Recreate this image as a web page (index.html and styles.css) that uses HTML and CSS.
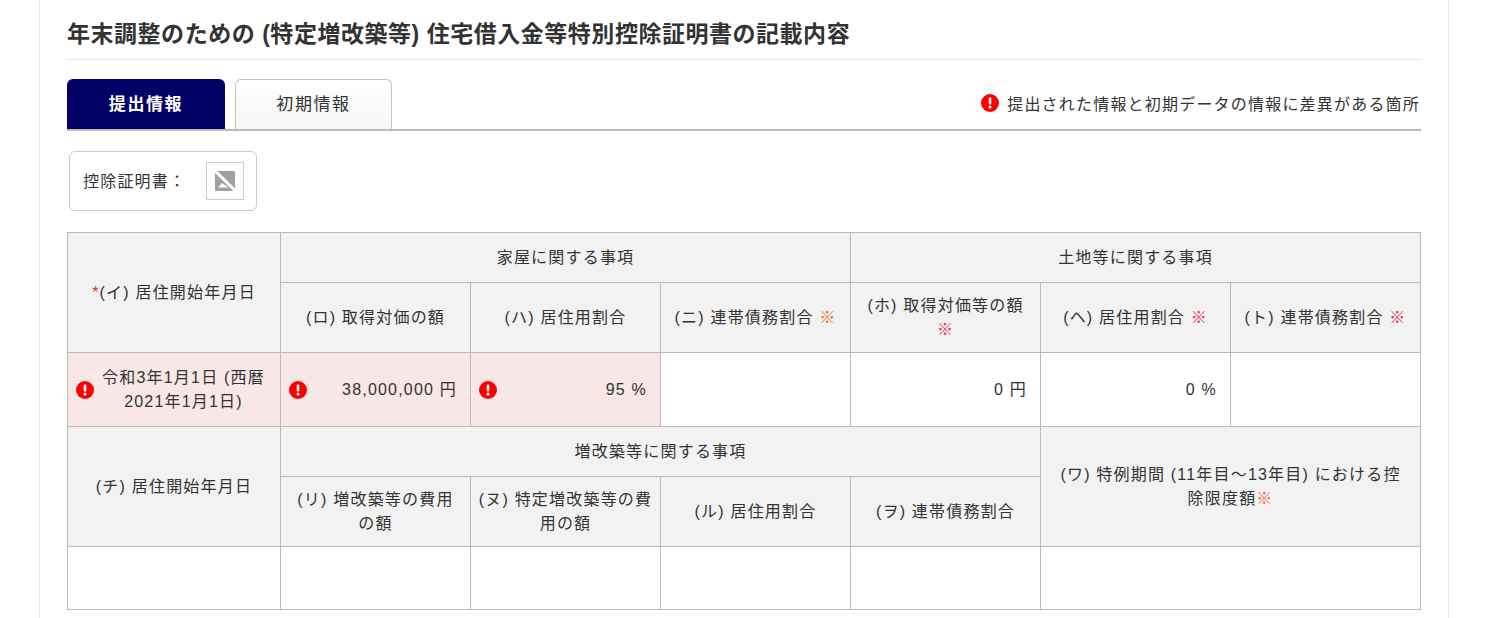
FILE: index.html
```html
<!DOCTYPE html>
<html lang="ja">
<head>
<meta charset="utf-8">
<title>住宅借入金等特別控除証明書の記載内容</title>
<link rel="stylesheet" href="styles.css">
</head>
<body>
<main class="card">
  <h1 class="title">年末調整のための (特定増改築等) 住宅借入金等特別控除証明書の記載内容</h1>
  <div class="tabs">
    <a class="tab active">提出情報</a>
    <a class="tab">初期情報</a>
    <p class="legend">
      <svg class="alert" viewBox="0 0 18 18"><circle cx="9" cy="9" r="9"/><rect x="7.7" y="3.6" width="2.6" height="7" rx="1"/><circle cx="9" cy="13" r="1.5"/></svg>
      提出された情報と初期データの情報に差異がある箇所
    </p>
  </div>
  <div class="cert">
    <span>控除証明書：</span>
    <span class="thumb">
      <svg viewBox="0 0 20 20" width="20" height="20"><rect width="20" height="20" rx="1" fill="#a0a0a0"/><path d="M3 16.5 L7 12 L13.5 16.5 Z" fill="#fff"/><path d="M0 0 L20 20" stroke="#fff" stroke-width="3.4"/><path d="M-1 1.5 L19 21" stroke="#a0a0a0" stroke-width="1"/></svg>
    </span>
  </div>
  <table class="data">
    <colgroup><col class="c-first"><col class="c"><col class="c"><col class="c"><col class="c"><col class="c"><col class="c"></colgroup>
    <tr class="r50">
      <th rowspan="2"><i class="req">*</i>(イ) 居住開始年月日</th>
      <th colspan="3">家屋に関する事項</th>
      <th colspan="3">土地等に関する事項</th>
    </tr>
    <tr class="r70">
      <th>(ロ) 取得対価の額</th>
      <th>(ハ) 居住用割合</th>
      <th>(ニ) 連帯債務割合 <i class="note">※</i></th>
      <th>(ホ) 取得対価等の額<br><i class="note pink">※</i></th>
      <th>(ヘ) 居住用割合 <i class="note pink">※</i></th>
      <th>(ト) 連帯債務割合 <i class="note pink">※</i></th>
    </tr>
    <tr class="r74">
      <td class="diff">
        <div class="cell">
          <svg class="alert" viewBox="0 0 18 18"><circle cx="9" cy="9" r="9"/><rect x="7.7" y="3.6" width="2.6" height="7" rx="1"/><circle cx="9" cy="13" r="1.5"/></svg>
          <span class="mid">令和3年1月1日 (西暦2021年1月1日)</span>
        </div>
      </td>
      <td class="diff">
        <div class="cell">
          <svg class="alert" viewBox="0 0 18 18"><circle cx="9" cy="9" r="9"/><rect x="7.7" y="3.6" width="2.6" height="7" rx="1"/><circle cx="9" cy="13" r="1.5"/></svg>
          <span class="num">38,000,000 円</span>
        </div>
      </td>
      <td class="diff">
        <div class="cell">
          <svg class="alert" viewBox="0 0 18 18"><circle cx="9" cy="9" r="9"/><rect x="7.7" y="3.6" width="2.6" height="7" rx="1"/><circle cx="9" cy="13" r="1.5"/></svg>
          <span class="num">95 %</span>
        </div>
      </td>
      <td></td>
      <td><div class="cell"><span class="num">0 円</span></div></td>
      <td><div class="cell"><span class="num">0 %</span></div></td>
      <td></td>
    </tr>
    <tr class="r50">
      <th rowspan="2">(チ) 居住開始年月日</th>
      <th colspan="4">増改築等に関する事項</th>
      <th colspan="2" rowspan="2">(ワ) 特例期間 (11年目～13年目) における控<br>除限度額<i class="note">※</i></th>
    </tr>
    <tr class="r70">
      <th>(リ) 増改築等の費用<br>の額</th>
      <th>(ヌ) 特定増改築等の費<br>用の額</th>
      <th>(ル) 居住用割合</th>
      <th>(ヲ) 連帯債務割合</th>
    </tr>
    <tr class="r63">
      <td></td><td></td><td></td><td></td><td></td><td colspan="2"></td>
    </tr>
  </table>
</main>
</body>
</html>
```

FILE: styles.css
```css
* { box-sizing: border-box; }
html, body { margin: 0; padding: 0; background: #fff; }
body {
  height: 618px;
  overflow: hidden;
  color: #333;
  font-family: "Liberation Sans", "Noto Sans CJK JP", sans-serif;
}
.card {
  width: 1410px;
  height: 618px;
  margin-left: 39px;
  padding: 0 27px;
  border-left: 1px solid #e8e8e8;
  border-right: 1px solid #e8e8e8;
}
.title {
  margin: 0;
  height: 60px;
  padding-top: 17px;
  font-size: 23px;
  line-height: 34px;
  letter-spacing: 0.53px;
  font-weight: 700;
  border-bottom: 1px solid #e6e6e6;
  white-space: nowrap;
}
.tabs {
  display: flex;
  align-items: stretch;
  gap: 10px;
  height: 71px;
  padding-top: 19px;
  border-bottom: 2px solid #bbb;
}
.tab {
  display: flex;
  align-items: center;
  justify-content: center;
  height: 50px;
  padding-bottom: 4px;
  font-size: 17px;
  letter-spacing: 1.6px;
  border: 1px solid #c4c4c4;
  border-bottom: 0;
  border-radius: 6px 6px 0 0;
  background: linear-gradient(#fff, #f6f6f6);
  width: 157px;
}
.tab.active {
  width: 158px;
  color: #fff;
  font-weight: 700;
  background: #000066;
  border-color: #000066;
}
.legend {
  margin: -3px 1px 0 auto;
  align-self: center;
  display: flex;
  align-items: center;
  gap: 8px;
  font-size: 16px;
  letter-spacing: 1.2px;
  white-space: nowrap;
}
.alert { width: 18px; height: 18px; flex: none; fill: #fe0000; }
.alert rect, .alert circle + rect + circle { fill: #fff; }
.cert {
  display: flex;
  align-items: center;
  width: 188px;
  height: 60px;
  margin: 20px 0 21px 2px;
  padding-left: 13px;
  border: 1px solid #ccc;
  border-radius: 6px;
  font-size: 16px;
  letter-spacing: 1.2px;
}
.cert > span:first-child { padding-bottom: 2px; }
.thumb {
  display: flex;
  align-items: center;
  justify-content: center;
  width: 38px;
  height: 38px;
  margin-left: 20px;
  border: 1px solid #ccc;
}
.data {
  table-layout: fixed;
  border-collapse: collapse;
  width: 1353px;
  font-size: 16px;
  letter-spacing: 1.2px;
  line-height: 24px;
}
.c-first { width: 213px; }
.c { width: 190px; }
.data th, .data td {
  border: 1px solid #bbb;
  padding: 0 8px;
  font-weight: 400;
  text-align: center;
  vertical-align: middle;
}
.data th { background: #f2f2f2; padding: 0 7px; }
.data td { background: #fff; }
.data td.diff { background: #f9e6e7; }
.r50 { height: 50px; }
.r70 { height: 70px; }
.r74 { height: 74px; }
.r63 { height: 63px; }
.req { font-style: normal; color: #e03030; }
.note { font-style: normal; color: #f5661e; }
.note.pink { color: #f0284f; }
.cell { display: flex; align-items: center; gap: 8px; }
.mid { flex: 1; text-align: center; padding-right: 7px; }
.num { flex: 1; text-align: right; padding-right: 5px; }
```
